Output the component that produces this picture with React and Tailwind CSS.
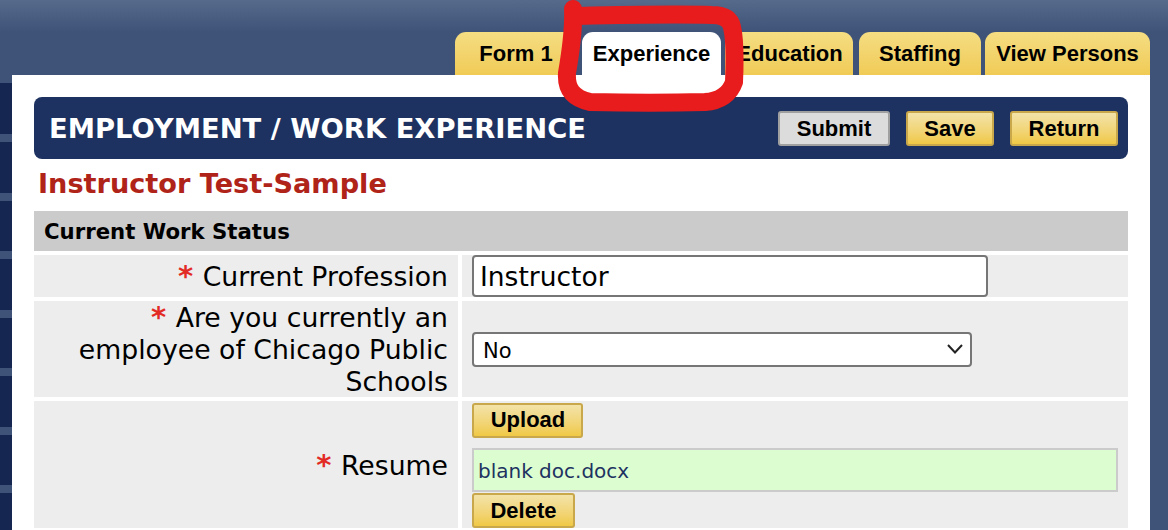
import React from 'react';

const verdana = 'font-["DejaVu_Sans",sans-serif]';
const arial = 'font-["Liberation_Sans",Arial,sans-serif]';

const Tab = ({ label, active, className }) => (
  <div
    className={`h-[43px] rounded-t-[11px] pt-[8px] text-center text-[22px] leading-[27px] font-bold text-black ${arial} ${
      active ? 'bg-white' : 'bg-gradient-to-b from-[#f5dd82] to-[#f0cb55]'
    } ${className}`}
  >
    {label}
  </div>
);

const Button = ({ label, gray, className }) => (
  <button
    className={`h-[35px] rounded-[3px] border-2 text-[22px] leading-[29px] font-bold text-black ${arial} ${
      gray
        ? 'border-[#a0a0a0] bg-[#dcdcdc]'
        : 'border-[#c8a84a] bg-gradient-to-b from-[#f3e3a8] to-[#f0c944]'
    } ${className}`}
  >
    {label}
  </button>
);

const Label = ({ children, className }) => (
  <div className={`flex w-[424px] shrink-0 flex-col justify-center bg-[#ededed] pr-[10px] text-right text-[26.7px] leading-[32px] text-black ${verdana} ${className}`}>
    <div>{children}</div>
  </div>
);

const Star = () => <span className="mr-[1px] text-[29px] font-bold text-[#e32b26]">*</span>;

const stripBars = [134, 193, 251, 310, 368, 426, 485];

export default function App() {
  return (
    <div className="relative h-[530px] w-[1168px] overflow-hidden bg-[#3f5379]">
      <div className="h-[32px] bg-gradient-to-b from-[#566a8b] to-[#3f5379]" />

      <div className="flex h-[43px] justify-end gap-[4px] pr-[18px]">
        <Tab label="Form 1" className="mr-[3px] w-[120px] pl-[2px]" />
        <Tab label="Experience" active className="w-[139px]" />
        <Tab label="Education" className="mr-[2px] w-[128px] pl-[1px]" />
        <Tab label="Staffing" className="w-[122px]" />
        <Tab label="View Persons" className="w-[165px]" />
      </div>

      <div className="flex">
        <div className="mt-[8px] flex h-[447px] w-[12px] flex-col bg-[#152650]">
          {stripBars.map((y, i) => (
            <div key={y} className={`h-[8px] w-full bg-[#3f5379] ${i === 0 ? 'mt-[51px]' : 'mt-[50.5px]'}`} />
          ))}
        </div>

        <div className="h-[455px] w-[1138px] bg-white pl-[22px] pr-[22px] pt-[22px]">
          <div className="flex h-[62px] items-center justify-between rounded-[8px] bg-[#1d3261] pl-[16px] pr-[10px]">
            <h1 className={`-ml-[1px] pt-[1px] text-[27.4px] font-bold text-white ${verdana}`}>EMPLOYMENT / WORK EXPERIENCE</h1>
            <div className="flex gap-[16px]">
              <Button label="Submit" gray className="w-[112px]" />
              <Button label="Save" className="w-[88px]" />
              <Button label="Return" className="w-[108px]" />
            </div>
          </div>

          <div className={`h-[52px] pl-[4px] pt-[7px] text-[27.15px] leading-[36px] font-bold text-[#b02318] ${verdana}`}>
            Instructor Test-Sample
          </div>

          <div className={`flex h-[40px] items-center bg-[#cbcbcb] pl-[10px] pt-[2px] text-[21.25px] font-bold text-black ${verdana}`}>
            Current Work Status
          </div>

          <div className="mt-[4px] flex h-[42px] gap-[4px]">
            <Label><Star /> Current Profession</Label>
            <div className="flex-1 bg-[#ededed] pl-[10px]">
              <div className={`flex h-[42px] w-[516px] items-center rounded-[4px] border-2 border-[#767676] bg-white pl-[6px] pt-[2px] text-[26.5px] text-black ${verdana}`}>
                Instructor
              </div>
            </div>
          </div>

          <div className="mt-[4px] flex h-[96px] gap-[4px]">
            <Label><Star /> Are you currently an employee of Chicago Public Schools</Label>
            <div className="flex flex-1 items-center bg-[#ededed] pl-[10px]">
              <div className={`flex h-[35px] w-[500px] items-center justify-between rounded-[4px] border-2 border-[#767676] bg-white pl-[9px] pr-[6px] text-[21px] text-black ${verdana}`}>
                <span className="pt-[5px]">No</span>
                <svg width="18" height="12" viewBox="0 0 18 12" fill="none">
                  <path d="M2 2 L9 9.5 L16 2" stroke="#222" strokeWidth="2" />
                </svg>
              </div>
            </div>
          </div>

          <div className="mt-[4px] flex h-[127px] gap-[4px]">
            <Label className="pt-[2px]"><Star /> Resume</Label>
            <div className="flex-1 bg-[#ededed] pl-[10px] pt-[2px]">
              <Button label="Upload" className="block w-[111px] pl-[1px] pb-[2px]" />
              <div className={`mt-[10px] flex h-[44px] w-[646px] items-center border-2 border-[#cbcbcb] bg-[#dcfdd0] pl-[4px] pt-[1px] text-[20px] text-[#1d3261] ${verdana}`}>
                blank doc.docx
              </div>
              <Button label="Delete" className="mt-[1px] block w-[103px]" />
            </div>
          </div>
        </div>
      </div>

      {/* hand drawn marker circle around the Experience tab */}
      <svg className="absolute top-0 left-0" width="1168" height="530" fill="none">
        <path
          d="M573 9 C574 30 571 50 567 73 C566 88 572 98 590 102 C630 103 670 103 705 102 C720 101 730 94 734 82 C735 60 735 40 732 27 C730 18 722 15 712 15 C670 14 620 15 578 16"
          stroke="#e81c1c"
          strokeWidth="18"
          strokeLinecap="round"
          strokeLinejoin="round"
        />
      </svg>
    </div>
  );
}
